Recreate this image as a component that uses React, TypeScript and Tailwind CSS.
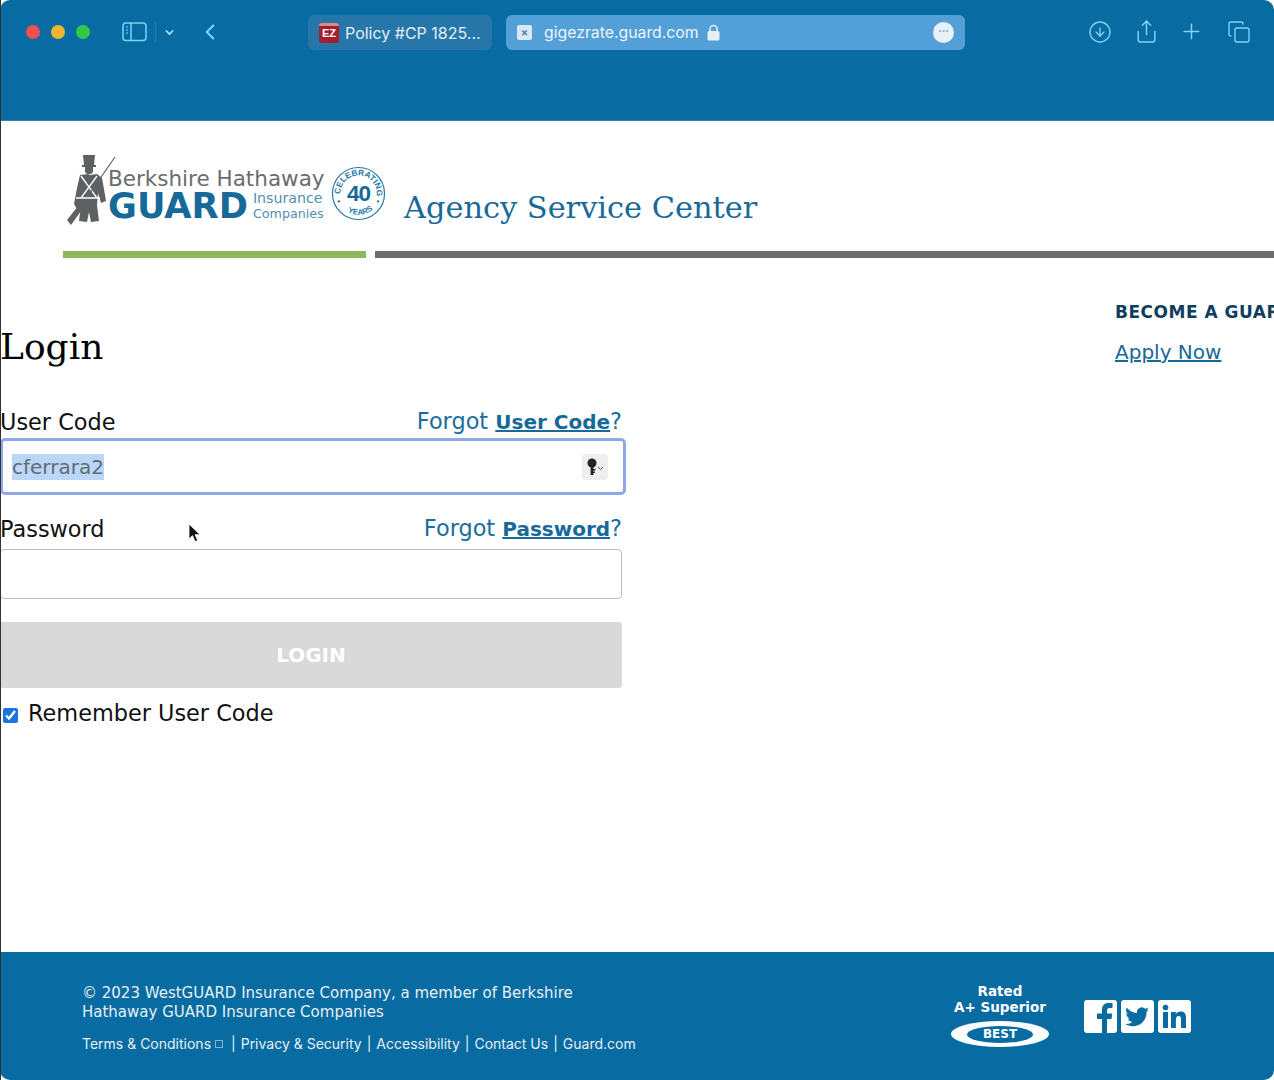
import React from "react";
import { ChevronLeft, ChevronDown, ArrowDownCircle, Share, Plus, Copy } from "lucide-react";

const sans = "font-['DejaVu_Sans',Verdana,sans-serif]";

function TrafficLights() {
  return (
    <div className="flex gap-[11px]">
      <span className="w-[14px] h-[14px] rounded-full bg-[#f4504f]" />
      <span className="w-[14px] h-[14px] rounded-full bg-[#f5b52f]" />
      <span className="w-[14px] h-[14px] rounded-full bg-[#33c748]" />
    </div>
  );
}

function SidebarIcon() {
  return (
    <svg width="26" height="20" viewBox="0 0 26 20" fill="none" stroke="#7fd3f7" strokeWidth="1.5">
      <rect x="1" y="1" width="23" height="17.5" rx="3" />
      <path d="M9 1v17.5" />
      <path d="M4 5h2M4 8h2M4 11h2" strokeWidth="1.2" />
    </svg>
  );
}

function BrowserBar() {
  return (
    <div className="h-[121px] shrink-0 bg-[#086ba1] rounded-t-[10px] border-b border-[#3b7f9f] pt-[15px] flex items-start">
      <div className="ml-[26px] mt-[10px]">
        <TrafficLights />
      </div>
      <div className="ml-[32px] mt-[4px] flex items-center">
        <SidebarIcon />
        <span className="ml-[7px] w-px h-[20px] bg-[#2a80ad]" />
        <ChevronDown className="ml-[7px] text-[#a8e2fb]" size={13} strokeWidth={3} />
        <ChevronLeft className="ml-[21px] text-[#7fd3f7]" size={26} strokeWidth={2} />
      </div>
      <div className="ml-[85px] w-[184px] h-[35px] rounded-[6px] bg-[#2776aa] flex items-center pl-[11px] text-[#e3eef5] text-[16px] font-['Inter',sans-serif]">
        <span className="w-[20px] h-[20px] rounded-[3px] bg-[#a51e2c] text-white text-[11px] font-bold leading-[14px] text-center shrink-0 font-['Liberation_Sans',sans-serif] border-t-[3px] border-[#d98a8f]">
          EZ
        </span>
        <span className="ml-[6px] whitespace-nowrap">Policy #CP 1825...</span>
      </div>
      <div className="ml-[14px] w-[459px] h-[35px] rounded-[6px] bg-[#539fd8] flex items-center pl-[11px] pr-[11px] text-[#eef4fa] text-[15.8px] font-['Inter',sans-serif]">
        <span className="w-[15px] h-[15px] rounded-[2px] bg-[#dbe9f5] text-[#4a7fa8] text-[11px] font-bold leading-[15px] text-center shrink-0">
          ×
        </span>
        <span className="ml-[12px] whitespace-nowrap">gigezrate.guard.com</span>
        <svg width="13" height="17" viewBox="0 0 13 17" className="ml-[8px]">
          <path d="M3 8V5a3.500 3.500 0 0 1 7 0v3" fill="none" stroke="#e6eff7" strokeWidth="1.6" />
          <rect x="0.500" y="7" width="12" height="9.500" rx="1.500" fill="#e6eff7" />
        </svg>
        <span className="ml-auto w-[21px] h-[21px] rounded-full bg-[#e9f1f8] text-[#539fd8] text-[11px] font-bold leading-[19px] text-center">
          ···
        </span>
      </div>
      <div className="ml-[123px] mt-[4px] flex items-center text-[#7fd3f7]">
        <ArrowDownCircle size={24} strokeWidth={1.4} />
        <Share className="ml-[22px]" size={25} strokeWidth={1.4} />
        <Plus className="ml-[20px]" size={25} strokeWidth={1.4} />
        <Copy className="ml-[23px]" size={24} strokeWidth={1.4} />
      </div>
    </div>
  );
}

function Soldier() {
  return (
    <svg width="52" height="72" viewBox="0 0 52 72" className="shrink-0">
      <path d="M17 1h12l-1 10h-10z" fill="#5f6062" />
      <path d="M16 11h14v2H16z" fill="#5f6062" />
      <path d="M19 13h8v5l-2 2h-4l-2-2z" fill="#5f6062" />
      <path d="M14 21l8-1 2 1 7-1 5 4 3 17 1 6-5 2-3-10-1 12 2 16-8 1-2-10-2 10-8-1 2-16-4 4-3-5 3-16z" fill="#5f6062" />
      <path d="M15 22l16 22M31 22L15 44M10 44h24" stroke="#fff" strokeWidth="1.3" fill="none" />
      <path d="M22 42L49 3" stroke="#5f6062" strokeWidth="1.2" fill="none" />
      <path d="M1 66l15-19 4 3-15 21z" fill="#5f6062" />
    </svg>
  );
}

function Seal() {
  return (
    <svg width="55" height="55" viewBox="0 0 56 56" className="shrink-0">
      <circle cx="28" cy="28" r="26.500" fill="none" stroke="#1f77a8" strokeWidth="1.200" />
      <defs>
        <path id="sealTop" d="M9.900 32A18.500 18.500 0 1 1 46.100 32" />
        <path id="sealBottom" d="M10 41A23 23 0 0 0 46 41" />
      </defs>
      <text fontSize="8.500" fontWeight="700" fill="#1f77a8" fontFamily="Liberation Sans, sans-serif">
        <textPath href="#sealTop" startOffset="5%">CELEBRATING</textPath>
      </text>
      <text fontSize="8" fontWeight="700" fill="#1f77a8" fontFamily="Liberation Sans, sans-serif">
        <textPath href="#sealBottom" startOffset="22%">YEARS</textPath>
      </text>
      <circle cx="8" cy="36" r="1.200" fill="#1f77a8" />
      <circle cx="48" cy="36" r="1.200" fill="#1f77a8" />
      <text x="28" y="36" textAnchor="middle" fontSize="23" fontWeight="700" fill="#17699a" fontFamily="Liberation Sans, sans-serif" letterSpacing="-1">
        40
      </text>
    </svg>
  );
}

function Logo() {
  return (
    <div className="ml-[66px] flex items-start h-[100px]">
      <div className="mt-[33px]">
        <Soldier />
      </div>
      <div className="-ml-[10px] mt-[45px] w-[220px]">
        <div className={`${sans} text-[21.5px] leading-[26px] text-[#6b6c6e] whitespace-nowrap`}>Berkshire Hathaway</div>
        <div className="flex items-start -mt-[2px]">
          <span className={`${sans} text-[35.2px] leading-[32px] font-bold text-[#17699a]`}>GUARD</span>
          <span className={`${sans} ml-[5px] text-[14.2px] leading-[15px] text-[#4d8fb5] whitespace-nowrap mt-[1px]`}>
            Insurance
            <br />
            <span className="text-[12.7px]">Companies</span>
          </span>
        </div>
      </div>
      <div className="ml-[3px] mt-[45px]">
        <Seal />
      </div>
      <div className="ml-[18px] mt-[67px] font-['DejaVu_Serif',serif] text-[30.4px] leading-[40px] text-[#17699a] whitespace-nowrap">
        Agency Service Center
      </div>
    </div>
  );
}

function FieldLabel({ label, link }: { label: string; link: string }) {
  return (
    <div className={`flex justify-between items-end w-[622px] text-[22.4px] leading-[28px] ${sans}`}>
      <span className="text-[#111]">{label}</span>
      <span className="text-[#1a6d9c]">
        Forgot{" "}
        <a href="#" className="font-bold underline text-[#17699a] text-[20px]">
          {link}
        </a>
        ?
      </span>
    </div>
  );
}

function LoginForm() {
  return (
    <div className="w-[626px]">
      <h1 className="font-['DejaVu_Serif',serif] text-[36px] leading-[48px] text-black">Login</h1>
      <div className="mt-[36px]">
        <FieldLabel label="User Code" link="User Code" />
      </div>
      <div className="mt-[2px] w-[626px] h-[57px] rounded-[5px] border-[3px] border-[#8fa9e8] bg-white flex items-center pl-[9px] pr-[15px]">
        <span className={`${sans} text-[20px] leading-[26px] text-[#5f6b73] bg-[#bcd6f8]`}>cferrara2</span>
        <span className="ml-auto w-[26px] h-[26px] rounded-[4px] bg-[#eeeeee] flex items-center justify-center">
          <svg width="20" height="18" viewBox="0 0 20 18" fill="#1f2226">
            <circle cx="7" cy="5" r="4.500" />
            <path d="M5.600 8h2.800v3h2v1.500h-2v1h1.500v1.500H8.400V17H5.600z" />
            <path d="M13 9l2.500 2.500L18 9" fill="none" stroke="#555" strokeWidth="1" />
          </svg>
        </span>
      </div>
      <div className="mt-[19px]">
        <FieldLabel label="Password" link="Password" />
      </div>
      <div className="mt-[6px] w-[622px] h-[50px] rounded-[4px] border border-[#bdbdbd] bg-white" />
      <button className={`mt-[23px] w-[622px] h-[66px] rounded-[3px] bg-[#d9d9d9] text-white font-bold text-[20px] block ${sans}`}>
        LOGIN
      </button>
      <label className={`mt-[11px] flex items-center text-[22.4px] leading-[28px] text-[#111] ${sans}`}>
        <input type="checkbox" defaultChecked className="ml-[3px] w-[15px] h-[15px] mt-[5px] accent-[#1b74e4]" />
        <span className="ml-[10px]">Remember User Code</span>
      </label>
    </div>
  );
}

function Footer() {
  return (
    <div className="mt-auto h-[128px] shrink-0 bg-[#086ba1] rounded-b-[10px] flex items-start text-white">
      <div className={`ml-[82px] mt-[32px] ${sans} text-[15px] leading-[19px] text-[#e6f0f6]`}>
        <div className="w-[520px] whitespace-nowrap">
          © 2023 WestGUARD Insurance Company, a member of Berkshire
          <br />
          Hathaway GUARD Insurance Companies
        </div>
        <div className="mt-[12px] flex items-center text-[14px] font-['Inter',sans-serif] whitespace-nowrap">
          <span>Terms &amp; Conditions</span>
          <span className="ml-[4px] w-[8px] h-[8px] border border-[#7fb6d6]" />
          <span className="ml-[8px]">|</span>
          <span className="ml-[5px]">Privacy &amp; Security</span>
          <span className="ml-[5px]">|</span>
          <span className="ml-[5px]">Accessibility</span>
          <span className="ml-[5px]">|</span>
          <span className="ml-[5px]">Contact Us</span>
          <span className="ml-[5px]">|</span>
          <span className="ml-[5px]">Guard.com</span>
        </div>
      </div>
      <div className={`ml-auto mt-[31px] w-[100px] text-center ${sans} text-[13.5px] leading-[16px] font-bold`}>
        Rated
        <br />
        A+ Superior
        <div className="mt-[6px] mx-auto w-[98px] h-[26px] rounded-[50%] bg-white flex items-center justify-center">
          <span className="w-[66px] h-[17px] rounded-[50%] bg-[#086ba1] text-[12px] leading-[17px]">BEST</span>
        </div>
      </div>
      <div className="ml-[34px] mr-[83px] mt-[48px] flex gap-[4px]">
        <svg width="33" height="33" viewBox="0 0 33 33">
          <rect width="33" height="33" rx="3" fill="#fff" />
          <path d="M18 33V19h-5v-5.500h5v-4c0-4 2.500-6.500 6.200-6.500h4.300v5h-3c-1.700 0-2.500 1-2.500 2.500v3h5.300l-.8 5.500h-4.500v14z" fill="#086ba1" />
        </svg>
        <svg width="33" height="33" viewBox="0 0 33 33">
          <rect width="33" height="33" rx="3" fill="#fff" />
          <path d="M28 9.500c-.9.400-1.800.700-2.800.800 1-.6 1.800-1.600 2.100-2.700-.9.600-2 1-3.100 1.200a4.900 4.900 0 0 0-8.300 4.400C11.900 12.600 8.300 10.700 5.900 7.700a4.900 4.900 0 0 0 1.500 6.500c-.8 0-1.500-.2-2.200-.6 0 2.400 1.700 4.400 3.900 4.900-.7.200-1.500.2-2.200.1.600 1.900 2.400 3.300 4.600 3.400a9.800 9.800 0 0 1-7.200 2c2.200 1.400 4.800 2.200 7.500 2.200 9 0 14.100-7.600 13.800-14.500 1-.7 1.800-1.500 2.400-2.200z" fill="#086ba1" />
        </svg>
        <svg width="33" height="33" viewBox="0 0 33 33">
          <rect width="33" height="33" rx="3" fill="#fff" />
          <rect x="5" y="12" width="5" height="16" fill="#086ba1" />
          <circle cx="7.500" cy="7.500" r="2.800" fill="#086ba1" />
          <path d="M13 12h4.800v2.200c.8-1.400 2.400-2.600 4.800-2.600 4.300 0 5.400 2.800 5.400 6.600V28h-5v-8.700c0-1.900-.5-3.300-2.300-3.300-2 0-2.800 1.500-2.800 3.300V28H13z" fill="#086ba1" />
        </svg>
      </div>
    </div>
  );
}

export default function App() {
  return (
    <div className="w-[1274px] h-[1080px] bg-[#1a1a1a] overflow-hidden relative">
      <div className="h-full bg-white flex flex-col">
        <BrowserBar />
        <div className="flex flex-col overflow-hidden">
          <Logo />
          <div className="mt-[30px] ml-[63px] flex gap-[9px]">
            <div className="w-[303px] h-[7px] bg-[#8db95c]" />
            <div className="flex-1 h-[7px] bg-[#6d6e70]" />
          </div>
          <div className="mt-[43px] flex">
            <div className="mt-[22px]">
              <LoginForm />
            </div>
            <div className={`ml-[489px] ${sans} whitespace-nowrap`}>
              <div className="text-[17px] leading-[22px] font-bold text-[#0f3d5f] tracking-[0.5px]">BECOME A GUARD AGENT</div>
              <a href="#" className="mt-[17px] block text-[20px] leading-[24px] underline text-[#17699a]">
                Apply Now
              </a>
            </div>
          </div>
        </div>
        <Footer />
      </div>
      <div className="absolute left-0 top-0 w-px h-full bg-[#333]" />
      <svg width="14" height="22" viewBox="0 0 14 22" className="absolute left-[188px] top-[523px]">
        <path d="M1 1v15l3.500-3.400 2.600 6 2.600-1.100-2.600-5.800h5z" fill="#111" stroke="#fff" strokeWidth="0.8" />
      </svg>
    </div>
  );
}
